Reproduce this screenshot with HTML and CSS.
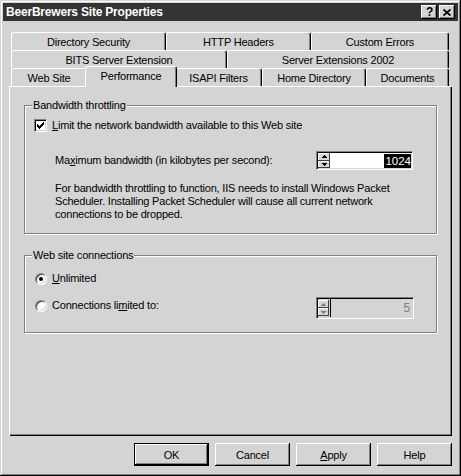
FILE: index.html
```html
<!DOCTYPE html>
<html>
<head>
<meta charset="utf-8">
<title>BeerBrewers Site Properties</title>
<link rel="stylesheet" href="styles.css">
</head>
<body>
<div class="window">
  <div class="titlebar">
    <span class="title">BeerBrewers Site Properties</span>
    <div class="caption-buttons">
      <span class="cap-btn cap-help">?</span>
      <span class="cap-btn cap-close">
        <svg width="8" height="7" viewBox="0 0 8 7"><path d="M0.5 0.5L7.5 6.5M7.5 0.5L0.5 6.5" stroke="#000" stroke-width="1.7" fill="none"/></svg>
      </span>
    </div>
  </div>

  <div class="client">
    <div class="tabstrip">
      <div class="tabrow">
        <div class="tab t-dirsec">Directory Security</div>
        <div class="tab t-http">HTTP Headers</div>
        <div class="tab t-errors">Custom Errors</div>
      </div>
      <div class="tabrow">
        <div class="tab t-bits">BITS Server Extension</div>
        <div class="tab t-servext">Server Extensions 2002</div>
      </div>
      <div class="tabrow">
        <div class="tab t-web">Web Site</div>
        <div class="tab t-perf active">Performance</div>
        <div class="tab t-isapi">ISAPI Filters</div>
        <div class="tab t-home">Home Directory</div>
        <div class="tab t-docs">Documents</div>
      </div>
    </div>

    <div class="panel">
      <div class="group group-bw">
        <div class="legend">Bandwidth throttling</div>
        <div class="check-row">
          <span class="checkbox">
            <svg width="7" height="7" viewBox="0 0 7 7" shape-rendering="crispEdges">
              <rect x="6" y="0" width="1" height="1"/>
              <rect x="5" y="1" width="2" height="1"/>
              <rect x="0" y="2" width="1" height="1"/>
              <rect x="4" y="2" width="3" height="1"/>
              <rect x="0" y="3" width="2" height="1"/>
              <rect x="3" y="3" width="3" height="1"/>
              <rect x="0" y="4" width="5" height="1"/>
              <rect x="1" y="5" width="3" height="1"/>
              <rect x="2" y="6" width="1" height="1"/>
            </svg>
          </span>
          <span class="label"><u>L</u>imit the network bandwidth available to this Web site</span>
        </div>
        <div class="max-row">
          <span class="label">Ma<u>x</u>imum bandwidth (in kilobytes per second):</span>
          <div class="spin">
            <div class="spin-btns">
              <span class="spin-btn">
                <svg width="5" height="3" viewBox="0 0 5 3" shape-rendering="crispEdges"><rect x="2" y="0" width="1" height="1"/><rect x="1" y="1" width="3" height="1"/><rect x="0" y="2" width="5" height="1"/></svg>
              </span>
              <span class="spin-btn">
                <svg width="5" height="3" viewBox="0 0 5 3" shape-rendering="crispEdges"><rect x="0" y="0" width="5" height="1"/><rect x="1" y="1" width="3" height="1"/><rect x="2" y="2" width="1" height="1"/></svg>
              </span>
            </div>
            <div class="spin-value"><span class="selected">1024</span></div>
          </div>
        </div>
        <p class="note">For bandwidth throttling to function, IIS needs to install Windows Packet<br>Scheduler. Installing Packet Scheduler will cause all current network<br>connections to be dropped.</p>
      </div>

      <div class="group group-conn">
        <div class="legend">Web site connections</div>
        <div class="radio-row">
          <span class="radio checked"></span>
          <span class="label"><u>U</u>nlimited</span>
        </div>
        <div class="limit-row">
          <div class="radio-item">
            <span class="radio"></span>
            <span class="label">Connections li<u>m</u>ited to:</span>
          </div>
          <div class="spin spin-disabled">
            <div class="spin-btns">
              <span class="spin-btn">
                <svg width="5" height="3" viewBox="0 0 5 3" shape-rendering="crispEdges"><rect x="2" y="0" width="1" height="1"/><rect x="1" y="1" width="3" height="1"/><rect x="0" y="2" width="5" height="1"/></svg>
              </span>
              <span class="spin-btn">
                <svg width="5" height="3" viewBox="0 0 5 3" shape-rendering="crispEdges"><rect x="0" y="0" width="5" height="1"/><rect x="1" y="1" width="3" height="1"/><rect x="2" y="2" width="1" height="1"/></svg>
              </span>
            </div>
            <div class="spin-value"><span class="dim">5</span></div>
          </div>
        </div>
      </div>
    </div>

    <div class="button-row">
      <span class="btn btn-default">OK</span>
      <span class="btn">Cancel</span>
      <span class="btn"><span><u>A</u>pply</span></span>
      <span class="btn">Help</span>
    </div>
  </div>
</div>
</body>
</html>
```
FILE: styles.css
```css
* {
  box-sizing: border-box;
}

html,
body {
  margin: 0;
  padding: 0;
}

body {
  width: 461px;
  height: 476px;
  overflow: hidden;
  background: #d4d4d4;
  color: #000;
  font-family: "Liberation Sans", Arial, sans-serif;
  font-size: 11px;
  letter-spacing: -0.2px;
}

u {
  text-decoration: underline;
  text-underline-offset: 1px;
}

/* ---------- window frame ---------- */
.window {
  width: 461px;
  height: 476px;
  padding: 3px;
  display: flex;
  flex-direction: column;
  background: #d4d4d4;
  box-shadow: inset -1px -1px #000, inset 1px 1px #d4d4d4,
    inset -2px -2px #808080, inset 2px 2px #fff;
}

.titlebar {
  height: 18px;
  flex: none;
  display: flex;
  align-items: center;
  justify-content: space-between;
  padding: 0 3px 0 3px;
  background: #333;
}

.title {
  color: #fff;
  font-weight: bold;
  font-size: 12px;
  letter-spacing: -0.2px;
  white-space: nowrap;
}

.caption-buttons {
  display: flex;
  gap: 2px;
}

.cap-btn {
  width: 16px;
  height: 14px;
  display: flex;
  align-items: center;
  justify-content: center;
  background: #d4d4d4;
  box-shadow: inset -1px -1px #000, inset 1px 1px #fff, inset -2px -2px #808080;
}

.cap-help {
  font-weight: bold;
  font-size: 12px;
  line-height: 14px;
  padding-left: 1px;
}

.cap-close svg {
  display: block;
}

/* ---------- client area ---------- */
.client {
  flex: 1;
  display: flex;
  flex-direction: column;
  padding: 11px 6px 0 6px;
}

.tabstrip {
  padding: 0 3px 0 2px;
}

.tabrow {
  display: flex;
  height: 18px;
}

.tab {
  height: 18px;
  flex: none;
  display: flex;
  align-items: center;
  justify-content: center;
  white-space: nowrap;
  background: #d4d4d4;
  border-top: 1px solid #fff;
  border-left: 1px solid #fff;
  border-right: 1px solid #000;
  border-radius: 3px 3px 0 0;
  box-shadow: inset -1px 0 #808080;
}

.tab.active {
  height: 21px;
  margin: -2px -2px 0 -2px;
  padding-bottom: 3px;
  position: relative;
  z-index: 1;
}

.t-dirsec { width: 155px; }
.t-http { width: 145px; }
.t-errors { width: 138px; }
.t-bits { width: 216px; }
.t-servext { width: 222px; }
.t-web { width: 76px; }
.t-perf { width: 92px; }
.t-isapi { width: 87px; }
.t-home { width: 104px; }
.t-docs { width: 83px; }

.panel {
  height: 350px;
  flex: none;
  padding-top: 19px;
  background: #d4d4d4;
  box-shadow: inset 1px 1px #fff, inset -1px -1px #000, inset -2px -2px #808080;
}

/* ---------- group boxes ---------- */
.group {
  margin: 0 15px;
  display: flex;
  flex-direction: column;
  align-items: flex-start;
  border: 1px solid #808080;
  box-shadow: inset 1px 1px #fff, 1px 1px #fff;
  padding-left: 9px;
}

.group-bw {
  padding-bottom: 12px;
}

.group-conn {
  margin-top: 21px;
  padding-bottom: 13px;
}

.legend {
  margin: -7px 0 0 -2px;
  padding: 0 1px;
  line-height: 13px;
  height: 13px;
  background: #d4d4d4;
  white-space: nowrap;
}

.label {
  white-space: nowrap;
  line-height: 13px;
}

.check-row {
  margin-top: 7px;
  height: 13px;
  display: flex;
  align-items: center;
  gap: 5px;
}

.checkbox {
  width: 13px;
  height: 13px;
  display: flex;
  align-items: center;
  justify-content: center;
  background: #fff;
  border: 1px solid;
  border-color: #808080 #fff #fff #808080;
  box-shadow: inset 1px 1px #000, inset -1px -1px #d4d4d4;
}

.checkbox svg {
  display: block;
  fill: #000;
}

.max-row {
  margin: 19px 0 0 21px;
  display: grid;
  grid-template-columns: 261px 97px;
  align-items: center;
}

.note {
  margin: 12px 0 0 21px;
  line-height: 13px;
  white-space: nowrap;
}

.radio-row {
  margin: 10px 0 0 1px;
  height: 13px;
  display: flex;
  align-items: center;
  gap: 5px;
}

.limit-row {
  margin-top: 12px;
  display: grid;
  grid-template-columns: 282px 98px;
  align-items: start;
}

.radio-item {
  margin: 2px 0 0 1px;
  height: 13px;
  display: flex;
  align-items: center;
  gap: 5px;
}

.radio {
  width: 12px;
  height: 12px;
  flex: none;
  position: relative;
  border-radius: 50%;
  background: #fff;
  border: 1px solid;
  border-color: #808080 #fff #fff #808080;
  box-shadow: inset 1px 1px #404040, inset -1px -1px #d4d4d4;
}

.radio.checked::after {
  content: "";
  position: absolute;
  left: 3px;
  top: 3px;
  width: 4px;
  height: 4px;
  border-radius: 50%;
  background: #000;
}

/* ---------- spin boxes ---------- */
.spin {
  width: 97px;
  height: 19px;
  display: flex;
  background: #fff;
  border: 1px solid;
  border-color: #808080 #fff #fff #808080;
  box-shadow: inset 1px 1px #000, inset -1px -1px #d4d4d4;
  padding: 1px;
}

.spin-btns {
  width: 12px;
  display: flex;
  flex-direction: column;
}

.spin-btn {
  flex: 1;
  display: flex;
  align-items: center;
  justify-content: center;
  background: #d4d4d4;
  box-shadow: inset -1px -1px #404040, inset 1px 1px #fff;
}

.spin-btn svg {
  display: block;
  fill: #000;
}

.spin-value {
  flex: 1;
  display: flex;
  align-items: center;
  justify-content: flex-end;
}

.selected {
  background: #000;
  color: #fff;
  line-height: 14px;
  padding: 0 0 0 1px;
  font-size: 11.5px;
  letter-spacing: 0;
}

.spin-disabled {
  width: 98px;
  height: 22px;
  background: #d4d4d4;
}

.spin-disabled .spin-btns {
  width: 13px;
  padding: 1px 1px 1px 0;
  border-right: 1px solid #000;
}

.spin-disabled .spin-btn svg {
  fill: #808080;
}

.dim {
  color: #808080;
  font-size: 12px;
  padding-right: 2px;
}

/* ---------- dialog buttons ---------- */
.button-row {
  margin-top: 7px;
  display: flex;
  justify-content: flex-end;
  gap: 6px;
}

.btn {
  width: 75px;
  height: 23px;
  display: flex;
  align-items: center;
  justify-content: center;
  background: #d4d4d4;
  box-shadow: inset -1px -1px #000, inset 1px 1px #fff, inset -2px -2px #808080;
}

.btn-default {
  border: 1px solid #000;
}
```
